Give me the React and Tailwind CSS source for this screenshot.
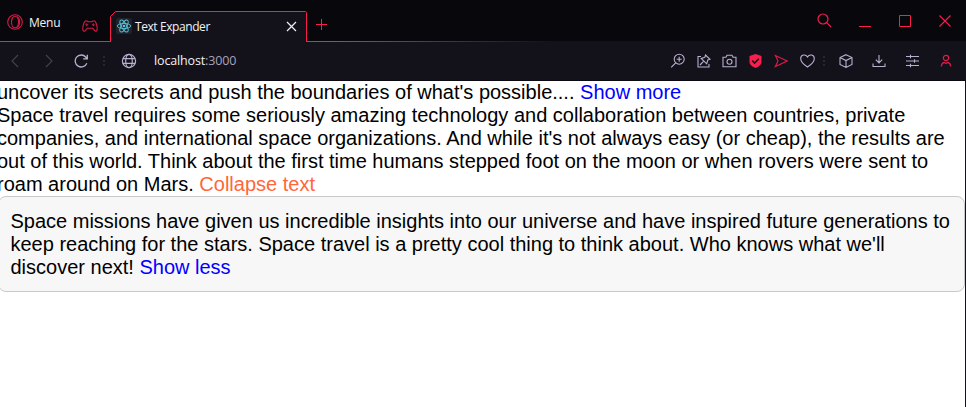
const ink = "#b9b0cf";
const red = "#fa1e4e";

function Icon({ className = "", w = 16, h = 16, color = ink, sw = 1.1, children }) {
  return (
    <svg className={"block shrink-0 " + className} width={w} height={h} viewBox={`0 0 ${w} ${h}`} fill="none" stroke={color} strokeWidth={sw}>
      {children}
    </svg>
  );
}

function TabStrip() {
  return (
    <div className="flex h-[42px] bg-[#08070b]">
      <div className="flex h-[42px] w-[110px] shrink-0 items-start border-b border-[#fa1e4e]">
        <Icon className="mt-[14px] ml-[7px]" color="#d81b46">
          <circle cx="8" cy="8" r="7.3" />
          <ellipse cx="8" cy="8" rx="3.5" ry="5.8" />
          <path d="M10 2.7C13.6 4.5 13.6 11.5 10 13.3" />
        </Icon>
        <span className="mt-[14px] ml-[6px] w-[31px] text-[12px] leading-[17px] tracking-[-0.25px] whitespace-nowrap text-[#f2f2f4]">Menu</span>
        <Icon className="mt-[20px] ml-[22px]" h={12} color="#d81b46">
          <path d="M4 .8C5.2 .8 5.5 1.7 6.5 1.7H9.5C10.5 1.7 10.8 .8 12 .8C14 .8 15.2 6 15.2 9C15.2 11.5 13.5 11.8 12.2 10.2L10.7 8.2H5.3L3.8 10.2C2.5 11.8 .8 11.5 .8 9C.8 6 2 .8 4 .8Z" />
          <path d="M3.3 4.8H6.3M4.8 3.3V6.3M9.8 4.8H12.8M11.3 3.3V6.3" strokeWidth=".9" />
        </Icon>
      </div>
      <div className="relative flex h-[42px] w-[197px] shrink-0 items-start">
        <svg className="absolute inset-0" width="197" height="42" fill="#13111a" stroke={red}>
          <path stroke="none" d="M0 42V16L5 11H196L197 12V42Z" />
          <path fill="none" d="M.5 42V16.5L5.5 11.5H195.5L196.5 12.5V42" />
        </svg>
        <span className="relative mt-[18px] ml-[6px] rounded-[2px] bg-[#222328]">
          <Icon color="#58c4dc" sw={0.9}>
            <ellipse cx="8" cy="8" rx="6.7" ry="2.6" />
            <ellipse cx="8" cy="8" rx="6.7" ry="2.6" transform="rotate(60 8 8)" />
            <ellipse cx="8" cy="8" rx="6.7" ry="2.6" transform="rotate(120 8 8)" />
            <circle cx="8" cy="8" r="1.3" fill="#58c4dc" stroke="none" />
          </Icon>
        </span>
        <span className="relative mt-[18px] ml-[3px] w-[148px] text-[12px] leading-[17px] tracking-[-0.42px] whitespace-nowrap text-[#f2f2f4]">Text Expander</span>
        <Icon className="relative mt-[21px] ml-[3px]" w={11} h={11} color="#f2f2f4" sw={1.2}>
          <path d="M1 1L10 10M10 1L1 10" />
        </Icon>
      </div>
      <div className="flex h-[42px] flex-1 items-start bg-[linear-gradient(to_right,#fa1e4e,#fa1e4e_30px,#13111a_245px)] bg-[length:100%_1px] bg-bottom bg-no-repeat">
        <Icon className="mt-[19px] ml-[9px]" w={11} h={11} color={red} sw={1}>
          <path d="M0 5.5H11M5.5 0V11" />
        </Icon>
        <Icon className="mt-[13px] ml-auto" w={15} h={15} color={red} sw={1.2}>
          <circle cx="6" cy="6" r="5" />
          <path d="M9.7 9.7L14 14" />
        </Icon>
        <Icon className="mt-[25px] ml-[27px]" w={12} h={2} color={red} sw={1}>
          <path d="M0 1.5H12" />
        </Icon>
        <Icon className="mt-[15px] ml-[28px]" w={12} h={12} color={red} sw={1}>
          <path d="M.5 .5H11.5V11.5H.5Z" />
        </Icon>
        <Icon className="mt-[15px] mr-[15px] ml-[28px]" w={12} h={12} color={red}>
          <path d="M.5 .5L11.5 11.5M11.5 .5L.5 11.5" />
        </Icon>
      </div>
    </div>
  );
}

function Dots() {
  return <Icon w={2} h={10} color="#292632" sw={2}><path d="M1 0V2M1 4V6M1 8V10" /></Icon>;
}

function AddressBar() {
  return (
    <div className="flex h-[39px] items-center border-b border-[#0b0911] bg-[#13111a] pl-[10px]">
      <Icon w={9} h={14} color="#45424f"><path d="M8 1L2 7L8 13" /></Icon>
      <Icon className="ml-[26px]" w={9} h={14} color="#45424f"><path d="M1 1L7 7L1 13" /></Icon>
      <Icon className="ml-[20px]" w={15} h={14} sw={1.3}>
        <path d="M12.8 9.2A6 6 0 1 1 11.7 3L13.2 4.7M13.3 .7V4.8H9.2" />
      </Icon>
      <div className="ml-[14px]"><Dots /></div>
      <Icon className="ml-[16px]" sw={1.2}>
        <circle cx="8" cy="8" r="6.6" />
        <ellipse cx="8" cy="8" rx="3.3" ry="6.6" />
        <path d="M1.8 5.7H14.2M1.8 10.3H14.2" />
      </Icon>
      <span className="ml-[17px] text-[12.5px] leading-[18px] tracking-[-0.15px] text-[#f2f2f4]">localhost<span className="text-[#aaa1bb]">:3000</span></span>
      <div className="mr-[14px] ml-auto flex items-center">
        <Icon>
          <circle cx="9.2" cy="6.2" r="5" /><path d="M5.7 9.8L1.2 14.3M6.7 6.2H11.7M9.2 3.7V8.7" />
        </Icon>
        <Icon className="ml-[11px]" w={14} h={14}>
          <path d="M4 2.5H1V13H12V10M8.5 1L13 5.3L10.8 6L9.7 9.8L4.2 4.4L7.8 3.3ZM6.7 7.2L3 11" />
        </Icon>
        <Icon className="ml-[11px]" w={15} h={14}>
          <path d="M1 3.2H4L5 1.2H10L11 3.2H14V12.8H1Z" /><circle cx="7.5" cy="7.8" r="2.5" />
        </Icon>
        <Icon className="ml-[12px]" w={13} h={14} color="none">
          <path fill={red} d="M6.5 0L12.5 2V8C12.5 11 9 13 6.5 14C4 13 .5 11 .5 8V2Z" />
          <path stroke="#13111a" strokeWidth="1.6" d="M3.2 6.6L5.6 9L9.8 4.8" />
        </Icon>
        <Icon className="ml-[12px]" w={15} h={14} color="#e01c48">
          <path d="M1.3 1.5L13.3 7L1.3 12.5L4 7Z" />
        </Icon>
        <Icon className="ml-[11px]" w={15} h={14}>
          <path d="M7.5 13C4 10.8.7 7.7.7 4.5C.7 .5 5.7-.2 7.5 3C9.3-.2 14.3.5 14.3 4.5C14.3 7.7 11 10.8 7.5 13Z" />
        </Icon>
        <div className="ml-[8px]"><Dots /></div>
        <Icon className="ml-[14px]" w={14} h={14}>
          <path d="M7 .7L13 3.5V10.5L7 13.4L1 10.5V3.5ZM1 3.5L7 6.6L13 3.5M7 6.6V13.4" />
        </Icon>
        <Icon className="ml-[19px]" w={14} h={14}>
          <path d="M7 1V8.8M3.8 5.7L7 8.9L10.2 5.7M1 9.5V12.5H13V9.5" />
        </Icon>
        <Icon className="ml-[20px]" w={13} h={14}>
          <path d="M0 2.5H13M0 7H13M0 11.5H13M4.5 .8V4.2M8.5 5.3V8.7M4.5 9.8V13.2" />
        </Icon>
        <Icon className="ml-[21px]" w={12} h={14} color="#e01c48" sw={1.2}>
          <circle cx="6" cy="4" r="2.7" />
          <path d="M1.3 12.5C1.5 9.8 2.8 8.7 4.2 8.3L6 9.6L7.8 8.3C9.2 8.7 10.5 9.8 10.7 12.5" />
        </Icon>
      </div>
    </div>
  );
}

export default function App() {
  return (
    <div className="h-[407px] w-[966px] overflow-hidden bg-white font-['Open_Sans','Noto_Sans',sans-serif]">
      <TabStrip />
      <AddressBar />
      <main className="h-[326px] overflow-hidden border-r border-[#13111a] bg-white font-['Liberation_Sans',Arial,sans-serif] text-[20px] leading-[23px] text-black">
        <div className="-ml-[3px] whitespace-nowrap">
          <p>uncover its secrets and push the boundaries of what's possible.... <span className="text-[#0000ff]">Show more</span></p>
          <p>
            Space travel requires some seriously amazing technology and collaboration between countries, private<br />
            companies, and international space organizations. And while it's not always easy (or cheap), the results are<br />
            out of this world. Think about the first time humans stepped foot on the moon or when rovers were sent to<br />
            roam around on Mars. <span className="text-[#ff6639]">Collapse text</span>
          </p>
          <div className="ml-[1px] h-[96px] rounded-[8px] border border-[#c8c8c8] bg-[#f7f7f7] pt-[13px] pl-[11.5px]">
            Space missions have given us incredible insights into our universe and have inspired future generations to<br />
            keep reaching for the stars. Space travel is a pretty cool thing to think about. Who knows what we'll<br />
            discover next! <span className="text-[#0000ff]">Show less</span>
          </div>
        </div>
      </main>
    </div>
  );
}
